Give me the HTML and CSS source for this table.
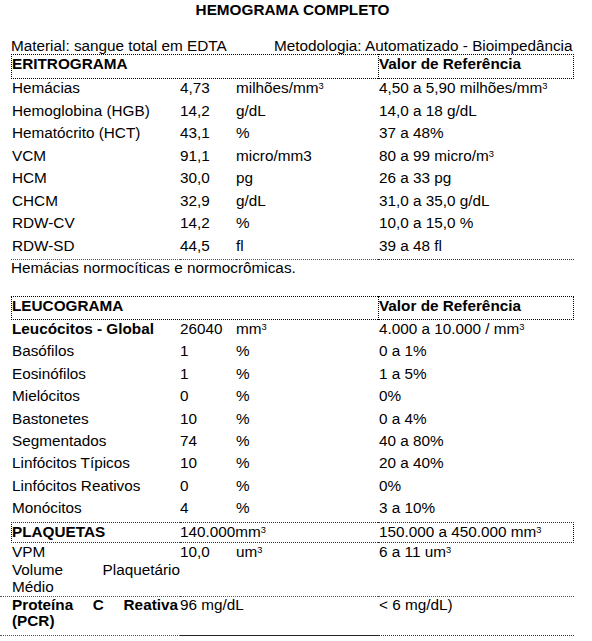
FILE: index.html
```html
<!DOCTYPE html>
<html lang="pt-BR">
<head>
<meta charset="utf-8">
<title>Hemograma Completo</title>
<link rel="stylesheet" href="styles.css">
</head>
<body>
<div class="sheet">
  <div class="title">HEMOGRAMA COMPLETO</div>
  <div class="meta">
    <span>Material: sangue total em EDTA</span>
    <span>Metodologia: Automatizado - Bioimpedância</span>
  </div>

  <div class="row head eri-head">
    <div class="cell c1 span3">ERITROGRAMA</div>
    <div class="cell c4">Valor de Referência</div>
  </div>
  <div class="eri">
    <div class="row"><div class="cell c1">Hemácias</div><div class="cell c2">4,73</div><div class="cell c3">milhões/mm<sup class="s">3</sup></div><div class="cell c4">4,50 a 5,90 milhões/mm<sup class="s">3</sup></div></div>
    <div class="row"><div class="cell c1">Hemoglobina (HGB)</div><div class="cell c2">14,2</div><div class="cell c3">g/dL</div><div class="cell c4">14,0 a 18 g/dL</div></div>
    <div class="row"><div class="cell c1">Hematócrito (HCT)</div><div class="cell c2">43,1</div><div class="cell c3">%</div><div class="cell c4">37 a 48%</div></div>
    <div class="row"><div class="cell c1">VCM</div><div class="cell c2">91,1</div><div class="cell c3">micro/mm3</div><div class="cell c4">80 a 99 micro/m<sup class="s">3</sup></div></div>
    <div class="row"><div class="cell c1">HCM</div><div class="cell c2">30,0</div><div class="cell c3">pg</div><div class="cell c4">26 a 33 pg</div></div>
    <div class="row"><div class="cell c1">CHCM</div><div class="cell c2">32,9</div><div class="cell c3">g/dL</div><div class="cell c4">31,0 a 35,0 g/dL</div></div>
    <div class="row"><div class="cell c1">RDW-CV</div><div class="cell c2">14,2</div><div class="cell c3">%</div><div class="cell c4">10,0 a 15,0 %</div></div>
    <div class="row rule"><div class="cell c1">RDW-SD</div><div class="cell c2">44,5</div><div class="cell c3">fl</div><div class="cell c4">39 a 48 fl</div></div>
  </div>
  <div class="note">Hemácias normocíticas e normocrômicas.</div>

  <div class="row head leu-head">
    <div class="cell c1 span3">LEUCOGRAMA</div>
    <div class="cell c4">Valor de Referência</div>
  </div>
  <div class="leu">
    <div class="row"><div class="cell c1 bold">Leucócitos - Global</div><div class="cell c2">26040</div><div class="cell c3">mm<sup class="s">3</sup></div><div class="cell c4">4.000 a 10.000 / mm<sup class="s">3</sup></div></div>
    <div class="row"><div class="cell c1">Basófilos</div><div class="cell c2">1</div><div class="cell c3">%</div><div class="cell c4">0 a 1%</div></div>
    <div class="row"><div class="cell c1">Eosinófilos</div><div class="cell c2">1</div><div class="cell c3">%</div><div class="cell c4">1 a 5%</div></div>
    <div class="row"><div class="cell c1">Mielócitos</div><div class="cell c2">0</div><div class="cell c3">%</div><div class="cell c4">0%</div></div>
    <div class="row"><div class="cell c1">Bastonetes</div><div class="cell c2">10</div><div class="cell c3">%</div><div class="cell c4">0 a 4%</div></div>
    <div class="row"><div class="cell c1">Segmentados</div><div class="cell c2">74</div><div class="cell c3">%</div><div class="cell c4">40 a 80%</div></div>
    <div class="row"><div class="cell c1">Linfócitos Típicos</div><div class="cell c2">10</div><div class="cell c3">%</div><div class="cell c4">20 a 40%</div></div>
    <div class="row"><div class="cell c1">Linfócitos Reativos</div><div class="cell c2">0</div><div class="cell c3">%</div><div class="cell c4">0%</div></div>
    <div class="row"><div class="cell c1">Monócitos</div><div class="cell c2">4</div><div class="cell c3">%</div><div class="cell c4">3 a 10%</div></div>
  </div>

  <div class="row plq">
    <div class="cell c1 bold">PLAQUETAS</div>
    <div class="cell c2 span2">140.000mm<sup class="s">3</sup></div>
    <div class="cell c4">150.000 a 450.000 mm<sup class="s">3</sup></div>
  </div>
  <div class="row vpm">
    <div class="cell c1 just">VPM<br>Volume Plaquetário Médio</div>
    <div class="cell c2">10,0</div>
    <div class="cell c3">um<sup class="s">3</sup></div>
    <div class="cell c4">6 a 11 um<sup class="s">3</sup></div>
  </div>
  <div class="row pcr">
    <div class="cell c1 just bold">Proteína C Reativa (PCR)</div>
    <div class="cell c2 span2">96 mg/dL</div>
    <div class="cell c4">&lt; 6 mg/dL)</div>
  </div>
</div>
</body>
</html>
```

FILE: styles.css
```css
* {
  box-sizing: border-box;
  margin: 0;
  padding: 0;
}

body {
  background: #ffffff;
  color: #000000;
  font-family: "Liberation Sans", Arial, sans-serif;
  font-size: 15.3px;
}

.sheet {
  margin-left: 11px;
  width: 563px;
}

.title {
  text-align: center;
  font-weight: bold;
  line-height: 20px;
}

.meta {
  display: flex;
  justify-content: space-between;
  margin-top: 17px;
  line-height: 17px;
  padding-right: 1.5px;
  white-space: nowrap;
}

.row {
  display: grid;
  grid-template-columns: 169px 56px 142px 196px;
}

.cell {
  white-space: nowrap;
}

.c1 {
  padding-left: 1px;
}

.c4 {
  padding-left: 1px;
}

.span3 {
  grid-column: 1 / 4;
}

.span2 {
  grid-column: 2 / 4;
}

.bold {
  font-weight: bold;
}

.s {
  font-size: 9.3px;
  vertical-align: 4.3px;
  line-height: 0;
}

/* boxed section headers */
.head .cell {
  font-weight: bold;
  border-top: 1px dotted #000;
  border-bottom: 1px dotted #000;
}

.head .c1 {
  border-left: 1px dotted #000;
  padding-left: 0;
}

.head .c4 {
  border-left: 1px dotted #000;
  border-right: 1px dotted #000;
  padding-left: 0;
}

.eri-head .cell {
  line-height: 17.4px;
  padding-bottom: 5.6px;
}

.eri .cell {
  line-height: 18px;
  padding-bottom: 4.5px;
}

.rule .cell {
  border-bottom: 1px dotted #555;
}

.rule .c4 {
  border-bottom-color: #333;
}

.note {
  line-height: 15.4px;
}

.leu-head {
  margin-top: 20.6px;
}

.leu-head .cell {
  line-height: 18.8px;
  padding-bottom: 3.2px;
}

.leu .cell {
  line-height: 17.4px;
  padding-bottom: 5px;
}

/* platelets */
.plq .cell {
  border-top: 1px dotted #333;
  border-bottom: 1px dotted #333;
  line-height: 18px;
  padding-bottom: 1px;
}

.plq .c1 {
  border-left: 1px dotted #000;
  padding-left: 0;
}

.plq .c4 {
  border-right: 1px dotted #000;
}

.vpm .cell {
  padding-top: 0.3px;
  line-height: 17.6px;
}

.just {
  white-space: normal;
  text-align: justify;
}

.pcr .cell {
  border-top: 1px dotted #555;
  border-bottom: 1px dotted #555;
  line-height: 16.5px;
  padding-bottom: 5px;
}

.pcr .c1 {
  margin-left: -11px;
  padding-left: 12px;
  padding-right: 2px;
}

.pcr .c2 {
  border-bottom: 1px solid #222;
}

.pcr .c4 {
  border-bottom-color: #333;
}
```
